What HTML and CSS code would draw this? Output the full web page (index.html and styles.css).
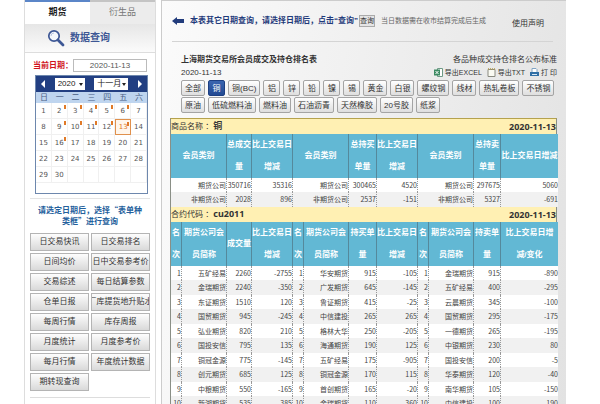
FILE: index.html
```html
<!DOCTYPE html>
<html lang="zh-CN">
<head>
    <meta charset="utf-8">
    <title>上海期货交易所 - 数据查询</title>
    <link rel="stylesheet" href="styles.css">
</head>
<body>
<div class="page">
    <aside class="sidebar">
        <nav class="tabs">
            <a href="#" class="active">期货</a>
            <a href="#">衍生品</a>
        </nav>
        <div class="side-title">
            <svg width="18" height="18" viewBox="0 0 18 18">
                <circle cx="7" cy="7" r="5.2" fill="#f4f7fb" stroke="#3d5795" stroke-width="1.7"/>
                <path d="M4 7a3 3 0 0 1 3-3" fill="none" stroke="#b9c6e2" stroke-width="1"/>
                <path d="M11 11l5 5" stroke="#3d5795" stroke-width="2.8" stroke-linecap="round"/>
            </svg>
            <h2>数据查询</h2>
        </div>

        <div class="date-row">
            <label for="date">当前日期：</label>
            <input type="text" id="date" value="2020-11-13">
        </div>

        <div class="calendar">
            <div class="cal-head">
                <button type="button" class="prev" aria-label="上个月"></button>
                <span class="select year"><select aria-label="年"><option>2020</option></select></span>
                <span class="select month"><select aria-label="月"><option>十一月</option></select></span>
                <button type="button" class="next" aria-label="下个月"></button>
            </div>
            <table>
                <thead>
                    <tr><th>日</th><th>一</th><th>二</th><th>三</th><th>四</th><th>五</th><th>六</th></tr>
                </thead>
                <tbody>
                    <tr><td>1</td><td class="has">2</td><td class="has">3</td><td class="has">4</td><td class="has">5</td><td class="has">6</td><td>7</td></tr>
                    <tr><td>8</td><td class="has">9</td><td class="has">10</td><td class="has">11</td><td class="has">12</td><td class="has today">13</td><td>14</td></tr>
                    <tr><td>15</td><td class="has">16</td><td>17</td><td>18</td><td>19</td><td>20</td><td>21</td></tr>
                    <tr><td>22</td><td>23</td><td>24</td><td>25</td><td>26</td><td>27</td><td>28</td></tr>
                    <tr><td>29</td><td>30</td><td></td><td></td><td></td><td></td><td></td></tr>
                </tbody>
            </table>
        </div>

        <p class="tip">请选定日期后，选择“表单种<br>类框”进行查询</p>

        <div class="forms">
            <button type="button">日交易快讯</button>
            <button type="button">日交易排名</button>
            <button type="button">日间均价</button>
            <button type="button">日中交易参考价</button>
            <button type="button">交易综述</button>
            <button type="button">每日结算参数</button>
            <button type="button">仓单日报</button>
            <button type="button">厂库提货地升贴水</button>
            <button type="button">每周行情</button>
            <button type="button">库存周报</button>
            <button type="button">月度统计</button>
            <button type="button">月度参考价</button>
            <button type="button">每月行情</button>
            <button type="button">年度统计数据</button>
            <button type="button">期转现查询</button>
        </div>
    </aside>

    <main class="main">
        <div class="topbar">
            <svg width="12" height="8" viewBox="0 0 12 8"><path d="M0 4l5-4v2h7v4H5v2z" fill="#223c7c"/></svg>
            <strong>本表其它日期查询，请选择日期后，点击“查询”</strong>
            <button type="button">查询</button>
            <span class="note">当日数据需在收市结算完成后生成</span>
            <a href="#">使用声明</a>
        </div>

        <div class="report-head">
            <div class="line">
                <h1>上海期货交易所会员成交及持仓排名表</h1>
                <a href="#">各品种成交持仓排名公布标准</a>
            </div>
            <div class="line">
                <span>2020-11-13</span>
                <div class="exports">
                    <a href="#">
                        <svg width="9" height="9" viewBox="0 0 9 9">
                            <path d="M3.5.5h5v8h-5z" fill="#fff" stroke="#6f9a86"/>
                            <path d="M0 1.5h6v6H0z" fill="#3c8a62"/>
                            <path d="M1.5 3l3 3M4.5 3l-3 3" stroke="#fff"/>
                        </svg>导出EXCEL</a>
                    <a href="#">
                        <svg width="9" height="9" viewBox="0 0 9 9">
                            <path d="M1 1.5h7v7H1z" fill="#fafaf2" stroke="#8a8a80"/>
                            <path d="M1 1h7" stroke="#b19a50" stroke-width="1.5" stroke-dasharray="1 1"/>
                        </svg>导出TXT</a>
                    <a href="#">
                        <svg width="9" height="9" viewBox="0 0 9 9">
                            <path d="M2 .5h4l1 1V5H2z" fill="#fff" stroke="#7fa3c4"/>
                            <path d="M0 4h9v4H0z" fill="#2f6ea5"/>
                            <path d="M2 6.5h5" stroke="#d7e8f5"/>
                        </svg>打 印</a>
                </div>
            </div>
        </div>

        <div class="products">
            <button type="button">全部</button>
            <button type="button" class="active">铜</button>
            <button type="button">铜(BC)</button>
            <button type="button">铝</button>
            <button type="button">锌</button>
            <button type="button">铅</button>
            <button type="button">镍</button>
            <button type="button">锡</button>
            <button type="button">黄金</button>
            <button type="button">白银</button>
            <button type="button">螺纹钢</button>
            <button type="button">线材</button>
            <button type="button">热轧卷板</button>
            <button type="button">不锈钢</button>
            <button type="button">原油</button>
            <button type="button">低硫燃料油</button>
            <button type="button">燃料油</button>
            <button type="button">石油沥青</button>
            <button type="button">天然橡胶</button>
            <button type="button">20号胶</button>
            <button type="button">纸浆</button>
        </div>

        <div class="data">
            <div class="bar"><span>商品名称 ：<b>铜</b></span><b>2020-11-13</b></div>
            <table>
                <colgroup>
                    <col class="kind"><col class="vol"><col class="diff">
                    <col class="kind"><col class="hold"><col class="diff">
                    <col class="kind"><col class="sell"><col class="last">
                </colgroup>
                <thead>
                    <tr>
                        <th>会员类别</th><th>总成交<br>量</th><th>比上交易日<br>增减</th>
                        <th>会员类别</th><th>总持买<br>单量</th><th>比上交易日<br>增减</th>
                        <th>会员类别</th><th>总持卖<br>单量</th><th>比上交易日增减</th>
                    </tr>
                </thead>
                <tbody>
                    <tr><td>期货公司</td><td>350716</td><td>35316</td><td>期货公司</td><td>300465</td><td>4520</td><td>期货公司</td><td>297675</td><td>5060</td></tr>
                    <tr><td>非期货公司</td><td>2028</td><td>896</td><td>非期货公司</td><td>2537</td><td>-151</td><td>非期货公司</td><td>5327</td><td>-691</td></tr>
                </tbody>
            </table>

            <div class="bar"><span>合约代码 ：<b>cu2011</b></span><b>2020-11-13</b></div>
            <table>
                <colgroup>
                    <col class="rank"><col class="name"><col class="vol"><col class="diff">
                    <col class="rank"><col class="name"><col class="hold"><col class="diff">
                    <col class="rank"><col class="name"><col class="sell"><col class="last">
                </colgroup>
                <thead>
                    <tr>
                        <th>名<br>次</th><th>期货公司会<br>员简称</th><th>成交量</th><th>比上交易日<br>增减</th>
                        <th>名<br>次</th><th>期货公司会<br>员简称</th><th>持买单<br>量</th><th>比上交易日<br>增减</th>
                        <th>名<br>次</th><th>期货公司会<br>员简称</th><th>持卖单<br>量</th><th>比上交易日增<br>减/变化</th>
                    </tr>
                </thead>
                <tbody>
                    <tr><td>1</td><td>五矿经易</td><td>2260</td><td>-2755</td><td>1</td><td>华安期货</td><td>915</td><td>-105</td><td>1</td><td>金瑞期货</td><td>915</td><td>-890</td></tr>
                    <tr><td>2</td><td>金瑞期货</td><td>2240</td><td>-350</td><td>2</td><td>广发期货</td><td>645</td><td>-145</td><td>2</td><td>五矿经易</td><td>400</td><td>-295</td></tr>
                    <tr><td>3</td><td>东证期货</td><td>1510</td><td>120</td><td>3</td><td>鲁证期货</td><td>415</td><td>-25</td><td>3</td><td>云晨期货</td><td>345</td><td>-100</td></tr>
                    <tr><td>4</td><td>国贸期货</td><td>945</td><td>-245</td><td>4</td><td>中信建投</td><td>265</td><td>265</td><td>4</td><td>国贸期货</td><td>295</td><td>-175</td></tr>
                    <tr><td>5</td><td>弘业期货</td><td>820</td><td>210</td><td>5</td><td>格林大华</td><td>250</td><td>-205</td><td>5</td><td>一德期货</td><td>265</td><td>-195</td></tr>
                    <tr><td>6</td><td>国投安信</td><td>795</td><td>135</td><td>6</td><td>海通期货</td><td>190</td><td>125</td><td>6</td><td>中银期货</td><td>230</td><td>80</td></tr>
                    <tr><td>7</td><td>铜冠金源</td><td>775</td><td>-145</td><td>7</td><td>五矿经易</td><td>175</td><td>-905</td><td>7</td><td>国投安信</td><td>200</td><td>-5</td></tr>
                    <tr><td>8</td><td>创元期货</td><td>685</td><td>125</td><td>8</td><td>铜冠金源</td><td>170</td><td>115</td><td>8</td><td>华泰期货</td><td>120</td><td>-40</td></tr>
                    <tr><td>9</td><td>中粮期货</td><td>550</td><td>-165</td><td>9</td><td>首创期货</td><td>165</td><td>-20</td><td>9</td><td>南华期货</td><td>105</td><td>-150</td></tr>
                    <tr><td>10</td><td>新湖期货</td><td>535</td><td>385</td><td>10</td><td>金瑞期货</td><td>110</td><td>-360</td><td>10</td><td>中信建投</td><td>100</td><td>-190</td></tr>
                </tbody>
            </table>
        </div>
    </main>
</div>
</body>
</html>
```
FILE: styles.css
```css
* {
    box-sizing: border-box;
}
body {
    margin: 0;
    background: #fff;
    color: #333;
    font-family: "Liberation Sans", "Noto Sans CJK SC", sans-serif;
    font-size: 8px;
    line-height: 12px;
}
h1, h2, p {
    margin: 0;
    font-size: 8px;
}
a {
    color: inherit;
    text-decoration: none;
}
button, input, select {
    margin: 0;
    padding: 0;
    font: inherit;
    color: inherit;
}
svg {
    flex: none;
}
table {
    width: 100%;
    table-layout: fixed;
    border-collapse: separate;
    border-spacing: 0;
}
th, td {
    padding: 0;
}
.page {
    display: flex;
    gap: 5px;
    min-height: 100vh;
    padding: 0 34px 0 24px;
}

/* left column */
.sidebar {
    flex: none;
    width: 132px;
    border: 1px solid #ddd;
    border-top: none;
    background: #fff;
}
.tabs {
    display: flex;
}
.tabs a {
    flex: 1;
    height: 24px;
    border-top: 2px solid #c4c4c4;
    background: #ececec;
    color: #777;
    font-size: 9px;
    line-height: 21px;
    text-align: center;
}
.tabs .active {
    border-color: #5b86c8;
    background: #fff;
    color: #222;
    font-weight: bold;
}
.side-title {
    display: flex;
    align-items: center;
    gap: 5px;
    height: 29px;
    padding-left: 22px;
    border-bottom: 1px solid #ddd;
    background: linear-gradient(#e6e6e6, #fbfbfb);
}
.side-title h2 {
    color: #3d5795;
    font-size: 10px;
}
.date-row {
    display: flex;
    align-items: center;
    justify-content: space-between;
    margin: 6px 10px 3px 8px;
}
.date-row label {
    color: #d0141c;
    font-weight: bold;
    white-space: nowrap;
}
.date-row input {
    width: 74px;
    height: 13px;
    border: 1px solid #bbb;
    background: #fff;
    color: #555;
    text-align: center;
}
.calendar {
    margin: 0 7px 0 10px;
    padding-bottom: 10px;
    border: 1px solid #6d87ad;
}
.cal-head {
    display: flex;
    align-items: center;
    justify-content: space-between;
    height: 16px;
    padding: 0 5px;
    background: #223f82;
}
.cal-head button {
    width: 4px;
    height: 8px;
    border: none;
    background: #fff;
}
.prev {
    clip-path: polygon(100% 0, 100% 100%, 0 50%);
}
.next {
    clip-path: polygon(0 0, 100% 50%, 0 100%);
}
.select {
    position: relative;
    display: flex;
}
.select select {
    width: 100%;
    height: 12px;
    padding-left: 3px;
    border: none;
    border-radius: 0;
    background: #fff;
    color: #222;
    appearance: none;
}
.select::after {
    content: "";
    position: absolute;
    right: 2px;
    top: 5px;
    border: 2px solid transparent;
    border-top: 3px solid #222;
    border-bottom: none;
    pointer-events: none;
}
.year {
    width: 30px;
}
.month {
    width: 34px;
}
.calendar th {
    height: 11px;
    background: #bfd5ef;
    color: #4a5f85;
    font-weight: normal;
    line-height: 11px;
}
.calendar td {
    position: relative;
    height: 16px;
    border-right: 1px solid #f0f0f0;
    border-bottom: 1px solid #f0f0f0;
    color: #555;
    font-size: 7px;
    font-family: "DejaVu Sans", sans-serif;
    line-height: 14px;
    text-align: center;
}
.calendar .has::after {
    content: "";
    position: absolute;
    top: 2px;
    right: 1px;
    width: 2px;
    height: 4px;
    background: #e07a28;
}
.calendar .today {
    border: 1px solid #e0904c;
    background: #fff6ec;
    color: #e07a28;
}
.tip {
    margin: 4px 5px 0;
    padding: 5px 0 7px;
    border-top: 1px solid #e4e4e4;
    color: #24609c;
    font-family: "Noto Sans CJK SC", sans-serif;
    font-weight: bold;
    line-height: 11px;
    text-align: center;
}
.forms {
    display: grid;
    grid-template-columns: 1fr 1fr;
    gap: 2px;
    margin: 0 5px;
    padding-bottom: 6px;
    border-bottom: 1px solid #ddd;
}
.forms button {
    display: flex;
    align-items: center;
    justify-content: center;
    min-width: 0;
    height: 18px;
    border: 1px solid #b4b4b4;
    background: linear-gradient(#fdfdfd, #d9d9d9);
    white-space: nowrap;
    overflow: hidden;
}

/* right column */
.main {
    flex: 1;
    min-width: 0;
    padding: 0 9px 0 8px;
    border-top: 1px solid #ccc;
    border-left: 1px solid #ccc;
    background: linear-gradient(100deg, #fbfbfb, #e2e2e2);
}
.topbar {
    display: flex;
    align-items: center;
    height: 41px;
    margin: 0 4px 0 2px;
    border-bottom: 1px solid #d4d4d4;
}
.topbar strong {
    margin-left: 6px;
    color: #1f3a7a;
    white-space: nowrap;
}
.topbar button {
    height: 12px;
    margin: 0 6px 0 1px;
    border: 1px solid #aaa;
    background: #e4e4e4;
    font-size: 7px;
    line-height: 10px;
}
.topbar .note {
    color: #666;
    font-size: 7px;
    white-space: nowrap;
}
.topbar a {
    margin-left: auto;
    padding: 6px 9px 0 0;
    white-space: nowrap;
}
.report-head {
    padding: 11px 0 0 11px;
}
.line {
    display: flex;
    align-items: center;
    justify-content: space-between;
    height: 13px;
}
.exports {
    display: flex;
    gap: 5px;
    font-size: 7px;
}
.exports a {
    display: flex;
    align-items: center;
    gap: 2px;
}
.products {
    display: flex;
    flex-wrap: wrap;
    gap: 1px 3px;
    padding: 1px 0 5px 11px;
}
.products button {
    min-width: 17px;
    height: 16px;
    padding: 0 3px;
    border: 1px solid #a4a4a4;
    border-radius: 2px;
    background: linear-gradient(#fff, #dedede);
    line-height: 13px;
}
.products .active {
    border-color: #1d3f82;
    background: linear-gradient(#3a65b0, #234a92);
    color: #fff;
}

/* tables */
.data {
    border: 1px solid #8a8f86;
    border-top-color: #b5a24e;
    border-width: 1px 1px 0 1px;
}
.bar {
    display: flex;
    align-items: center;
    justify-content: space-between;
    height: 15px;
    background: #fff0b3;
}
.bar b {
    font-family: "Noto Sans", "Noto Sans CJK SC", sans-serif;
    font-size: 9px;
}
.data th {
    height: 44px;
    border-right: 1px solid #55899c;
    background: #62b8d4;
    color: #fff;
    line-height: 22px;
    white-space: nowrap;
}
.data td {
    height: 14px;
    border-right: 1px dotted #999;
    background: #fff;
    color: #444;
    font-family: "Noto Sans CJK SC", sans-serif;
    font-size: 7px;
    line-height: 13px;
    text-align: right;
    white-space: nowrap;
}
.data tr:nth-child(even) td {
    height: 15px;
    background: #f1f1f1;
}
.data th:last-child,
.data td:last-child {
    border-right: none;
}
.rank {
    width: 11px;
}
.name {
    width: 45px;
}
.kind {
    width: 56px;
}
.vol {
    width: 25px;
}
.diff {
    width: 41px;
}
.hold {
    width: 28px;
}
.sell {
    width: 27px;
}
.last {
    width: 57px;
}
```
